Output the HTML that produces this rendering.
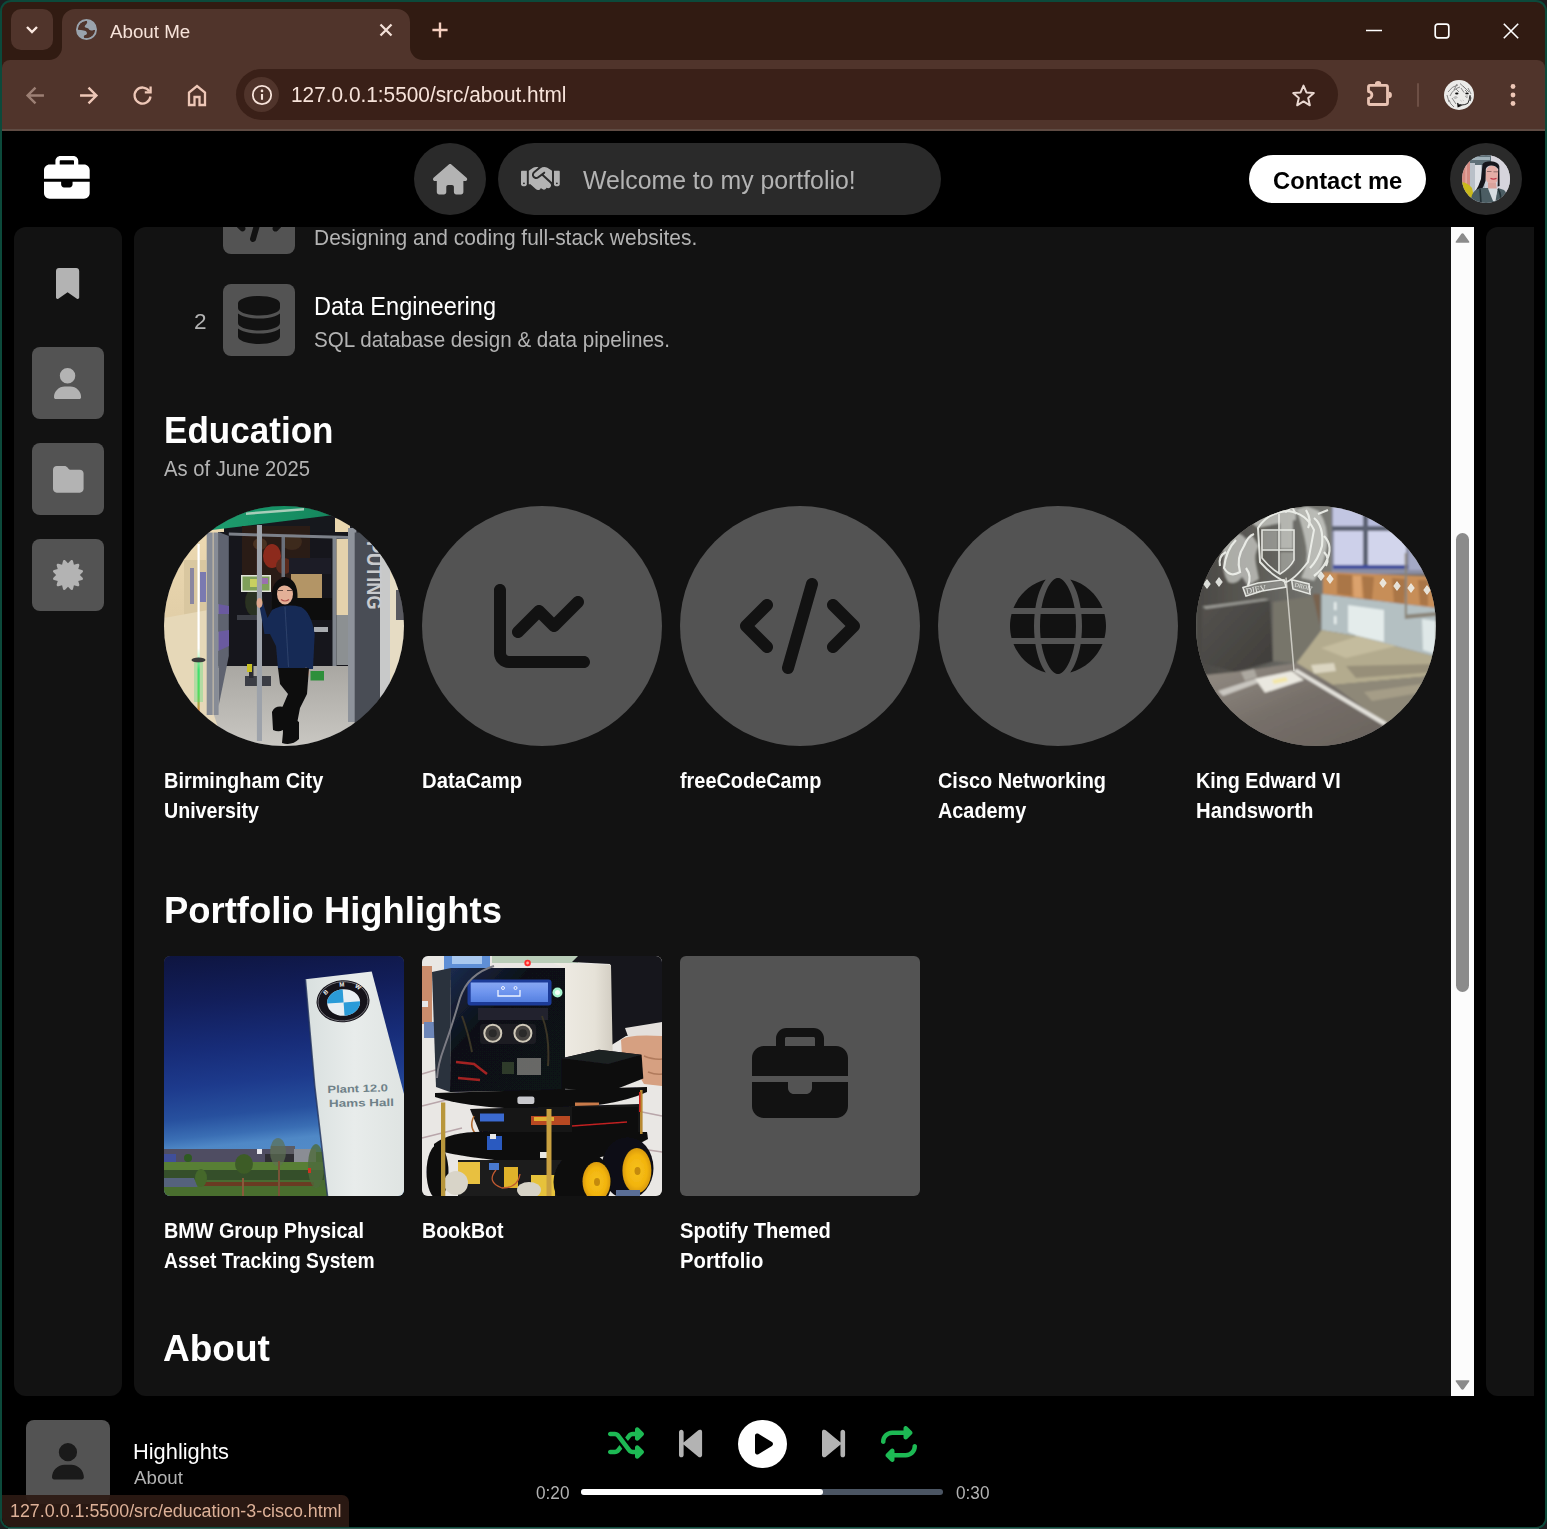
<!DOCTYPE html>
<html lang="en"><head><meta charset="utf-8"><title>About Me</title>
<style>
*{box-sizing:border-box;margin:0;padding:0}
html,body{width:1547px;height:1529px;overflow:hidden;background:#1d1d1f}
body{position:relative;font-family:"Liberation Sans",sans-serif}
.a{position:absolute}
.t{position:absolute;white-space:nowrap;line-height:1;transform-origin:0 50%}
.i{position:absolute;display:block;overflow:visible}
.win{position:absolute;left:0;top:0;width:1547px;height:1529px;background:#0c4a3b;border-radius:11px}
.inner{position:absolute;left:2px;top:2px;width:1543px;height:1525px;background:#311b12;border-radius:9px;overflow:hidden}
.page{position:absolute;left:0;top:129px;width:1543px;height:1396px;background:#000;overflow:hidden}
.panel{position:absolute;background:#121212}
.sq{position:absolute;background:#535353;border-radius:8px}
.circ{position:absolute;border-radius:50%;background:#535353;overflow:hidden}
.card{position:absolute;border-radius:6px;background:#535353;overflow:hidden}
</style></head>
<body>
<div class="win"><div class="a" style="left:8px;top:1528px;width:1531px;height:1px;background:#41605a"></div><div class="inner">
<!-- browser chrome -->
<div class="a" style="left:0;top:58px;width:1543px;height:69px;background:#50342b;border-radius:8px 8px 0 0"></div>
<div class="a" style="left:0;top:127px;width:1543px;height:2px;background:#5f4b43"></div>
<div class="a" style="left:9px;top:7px;width:42px;height:41px;border-radius:10px;background:#50342b"></div>
<svg class="i" style="left:22px;top:22px" width="16" height="12" viewBox="0 0 16 12"><path d="M3 3 L8 8 L13 3" fill="none" stroke="#fbe9e1" stroke-width="2.4"/></svg>
<svg class="i" style="left:47px;top:7px" width="374" height="53" viewBox="0 0 374 53"><path fill="#50342b" d="M0 51 A13 13 0 0 0 13 38 L13 13 A13 13 0 0 1 26 0 L348 0 A13 13 0 0 1 361 13 L361 38 A13 13 0 0 0 374 51 L374 53 L0 53 Z"/></svg>
<svg class="i" style="left:73.600px;top:17.400px" width="21" height="21" viewBox="0 0 21 21"><circle cx="10.500" cy="10.500" r="9.600" fill="#9aa3ad"/><path fill="#50342b" d="M1.700 10.700 A8.800 8.800 0 0 1 10.900 1.700 Q11.700 3.700 10.500 5 Q8.900 6 8.600 7.600 Q9 9 11 9.100 Q12.600 9.300 13.200 10.800 Q15.200 12 17.600 10.900 L19.300 10.900 A8.800 8.800 0 0 1 8.200 19 Q7.200 17.600 8.500 16.300 Q10.700 16 11 14.600 Q11 13 9.600 12.100 Q8 11.300 5 10.900 Z"/><circle cx="10.500" cy="10.500" r="9.600" fill="none" stroke="#9aa3ad" stroke-width="1.800"/></svg>
<span class="t" style="left:108.0px;top:21px;font-size:18px;font-weight:400;color:#f7e3da;transform:scaleX(1.0418);">About Me</span>
<svg class="i" style="left:377px;top:21px" width="14" height="14" viewBox="0 0 14 14"><path d="M1.500 1.500 L12.500 12.500 M12.500 1.500 L1.500 12.500" stroke="#f3e0d8" stroke-width="2.300" fill="none"/></svg>
<svg class="i" style="left:430px;top:20px" width="16" height="16" viewBox="0 0 16 16"><path d="M8 0.400 V15.600 M0.400 8 H15.600" stroke="#f5cfc0" stroke-width="2.400" fill="none"/></svg>
<svg class="i" style="left:1363px;top:27px" width="18" height="4" viewBox="0 0 18 4"><path d="M1 1.500 H17" stroke="#fff" stroke-width="1.600"/></svg>
<svg class="i" style="left:1432px;top:21px" width="16" height="16" viewBox="0 0 16 16"><rect x="1.200" y="1.200" width="13.600" height="13.600" rx="2.500" fill="none" stroke="#fff" stroke-width="1.700"/></svg>
<svg class="i" style="left:1501px;top:21px" width="16" height="16" viewBox="0 0 16 16"><path d="M0.800 0.800 L15.200 15.200 M15.200 0.800 L0.800 15.200" stroke="#fff" stroke-width="1.600"/></svg>
<svg class="i" style="left:23.500px;top:83.500px" width="19" height="19" viewBox="0 0 18 18"><path d="M17 9 H2 M9 1.500 L1.500 9 L9 16.500" fill="none" stroke="#9c7f74" stroke-width="2.300"/></svg>
<svg class="i" style="left:76.600px;top:83.500px" width="19" height="19" viewBox="0 0 18 18"><path d="M1 9 H16 M9 1.500 L16.500 9 L9 16.500" fill="none" stroke="#eec7b7" stroke-width="2.300"/></svg>
<svg class="i" style="left:130px;top:83px" width="21" height="21" viewBox="0 0 21 21"><path d="M17.300 6.200 A8 8 0 1 0 18.500 11.500" fill="none" stroke="#eec7b7" stroke-width="2.300"/><path d="M18.600 1.500 V7.300 H12.800" fill="none" stroke="#eec7b7" stroke-width="2.300"/></svg>
<svg class="i" style="left:185px;top:82px" width="20" height="22" viewBox="0 0 20 22"><path d="M2 21 V8.500 L10 2 L18 8.500 V21 H12.500 V13 H7.500 V21 Z" fill="none" stroke="#eec7b7" stroke-width="2.300"/></svg>
<div class="a" style="left:234px;top:67px;width:1102px;height:51px;border-radius:26px;background:#3a2018"></div>
<div class="a" style="left:241.600px;top:74.600px;width:35.800px;height:35.800px;border-radius:50%;background:#50342b"></div>
<svg class="i" style="left:248.500px;top:82px" width="22" height="22" viewBox="0 0 22 22"><circle cx="11" cy="11" r="9.200" fill="none" stroke="#f7e3da" stroke-width="1.800"/><path d="M11 10 V15.800" stroke="#f7e3da" stroke-width="2.100"/><circle cx="11" cy="6.900" r="1.300" fill="#f7e3da"/></svg>
<span class="t" style="left:289.4px;top:83px;font-size:21.5px;font-weight:400;color:#f7e3da;transform:scaleX(0.9683);">127.0.0.1:5500/src/about.html</span>
<svg class="i" style="left:1288.500px;top:80.500px" width="25" height="25" viewBox="0 0 24 24"><path d="M12 2.500 L14.800 9.100 L21.900 9.700 L16.500 14.400 L18.100 21.400 L12 17.700 L5.900 21.400 L7.500 14.400 L2.100 9.700 L9.200 9.100 Z" fill="none" stroke="#ead8d1" stroke-width="1.900" stroke-linejoin="round"/></svg>
<svg class="i" style="left:1360px;top:74px" width="32" height="34" viewBox="0 0 32 34"><path d="M6.500 15.600 V10.800 Q6.500 9.300 8 9.300 H24 Q25.500 9.300 25.500 10.800 V27 Q25.500 28.500 24 28.500 H8 Q6.500 28.500 6.500 27 V22.400 A3.400 3.400 0 0 0 6.500 15.600 Z" fill="none" stroke="#e9c3b3" stroke-width="2.800" stroke-linejoin="round"/><path d="M12.900 8.200 A3.200 3.200 0 0 1 19.300 8.200 Z M26.700 15.800 A3.200 3.200 0 0 1 26.700 22.200 Z" fill="#e9c3b3"/></svg>
<div class="a" style="left:1415px;top:81px;width:2px;height:24px;background:#6d4f45;border-radius:1px"></div>
<svg class="i" style="left:1442px;top:78.200px" width="30" height="30" viewBox="0 0 30 30"><circle cx="15" cy="15" r="15" fill="#ebebe9"/><g fill="none" stroke="#7c7c7c" stroke-width=".9"><path d="M4 12 Q8 6 14 5 M6 16 Q9 9 16 7 M10 10 L13 4 M16 3.500 L22 9 M19 6 L25 12 M24 8 L27 14 M5 20 Q6 24 10 27 M8 18 L12 24 M3 15 L5 22 M12 9 L15 12 M17 8 L20 12.500 M21 10 L23 12"/><path d="M9.500 17.500 l3 -1 M10.500 18.500 l3 -1 M21 16.500 l2.500 -.8 M22 17.500 l2 -.6" stroke="#9a9a9a"/><path d="M16.500 20.300 l1 .8 M18.800 20 l.8 .6" stroke="#aaa"/></g><ellipse cx="12.800" cy="13.500" rx="1.700" ry=".95" fill="#0a0a0a"/><ellipse cx="23" cy="13.400" rx="1.700" ry=".85" fill="#0a0a0a"/><path d="M13.100 23.200 Q17.500 26.600 23.800 23.400 Q25.600 20 25.900 15.400" fill="none" stroke="#2a2a2a" stroke-width="1"/><path d="M13.100 23.200 Q15 25.400 18.500 25.400 L13.600 27.400Z" fill="#0d0d0d"/><path d="M25.900 15.400 Q27.500 18 26 21" fill="none" stroke="#555" stroke-width="1.400"/></svg>
<svg class="i" style="left:1508px;top:80.300px" width="6" height="26" viewBox="0 0 6 26"><circle cx="3" cy="4.500" r="2.400" fill="#eec7b7"/><circle cx="3" cy="13" r="2.400" fill="#eec7b7"/><circle cx="3" cy="21.500" r="2.400" fill="#eec7b7"/></svg>
<!-- page -->
<div class="page">
<svg class="i" style="left:42.1px;top:25.3px" width="45.7" height="45.7" viewBox="0 0 512 512"><path fill="#fff" d="M184 48H328c4.4 0 8 3.6 8 8V96H176V56c0-4.400 3.600-8 8-8zm-56 8V96H64C28.700 96 0 124.700 0 160v96H192 320 512V160c0-35.300-28.700-64-64-64H384V56c0-30.900-25.100-56-56-56H184c-30.900 0-56 25.100-56 56zM512 288H320v32c0 17.700-14.300 32-32 32H224c-17.700 0-32-14.300-32-32V288H0V416c0 35.300 28.700 64 64 64H448c35.300 0 64-28.700 64-64V288z"/></svg>
<div class="a" style="left:412px;top:12px;width:72px;height:72px;border-radius:50%;background:#2a2a2a"></div>
<svg class="i" style="left:430.9px;top:32.5px" width="34.2" height="30.4" viewBox="0 0 576 512"><path fill="#b3b3b3" d="M575.8 255.5c0 18-15 32.100-32 32.100h-32l.7 160.200c0 2.700-.2 5.400-.5 8.100V472c0 22.100-17.900 40-40 40H456c-1.100 0-2.200 0-3.300-.1c-1.400 .1-2.800 .1-4.200 .1H416 392c-22.100 0-40-17.900-40-40V448 384c0-17.700-14.300-32-32-32H256c-17.700 0-32 14.300-32 32v64 24c0 22.100-17.900 40-40 40H160 128.100c-1.500 0-3-.1-4.500-.2c-1.200 .1-2.400 .2-3.600 .2H104c-22.100 0-40-17.900-40-40V360c0-.9 0-1.900 .1-2.800V287.600H32c-18 0-32-14-32-32.100c0-9 3-17 10-24L266.400 8c7-7 15-8 22-8s15 2 21 7L564.800 231.500c8 7 12 15 11 24z"/></svg>
<div class="a" style="left:496px;top:12px;width:443px;height:72px;border-radius:36px;background:#2a2a2a"></div>
<svg class="i" style="left:518.6px;top:32.0px" width="38.8" height="31.0" viewBox="0 0 640 512"><path fill="#b3b3b3" d="M323.400 85.200l-96.800 78.400c-16.100 13-19.200 36.400-7 53.100c12.900 17.800 38 21.300 55.300 7.800l99.300-77.200c7-5.400 17-4.200 22.500 2.800s4.200 17-2.800 22.500l-20.900 16.200L512 316.800V128h-.7l-3.900-2.500L434.800 79c-15.300-9.800-33.200-15-51.400-15c-21.800 0-43 7.500-60 21.200zm22.800 124.400l-51.700 40.200C263 274.400 217.300 268 193.700 235.600c-22.200-30.500-16.600-73.100 12.700-96.800l83.200-67.300c-11.600-4.900-24.100-7.400-36.800-7.400C234 64 215.700 69.600 200 80l-72 48V352h28.200l91.400 83.400c19.600 17.900 49.900 16.500 67.800-3.100c5.500-6.100 9.200-13.200 11.100-20.600l17 15.600c19.500 17.900 49.900 16.600 67.800-2.900c4.500-4.900 7.800-10.600 9.900-16.500c19.400 13 45.800 10.300 62.100-7.500c17.900-19.500 16.600-49.900-2.900-67.800l-134.200-123zM16 128c-8.800 0-16 7.200-16 16V352c0 17.700 14.300 32 32 32H64c17.700 0 32-14.300 32-32V128H16zM48 320a16 16 0 1 1 0 32 16 16 0 1 1 0-32zM544 128V352c0 17.700 14.300 32 32 32h32c17.700 0 32-14.300 32-32V144c0-8.800-7.200-16-16-16H544zm32 208a16 16 0 1 1 32 0 16 16 0 1 1 -32 0z"/></svg>
<span class="t" style="left:580.8px;top:37px;font-size:25px;font-weight:400;color:#b3b3b3;transform:scaleX(0.9927);">Welcome to my portfolio!</span>
<div class="a" style="left:1247px;top:24px;width:177px;height:48px;border-radius:24px;background:#fff"></div>
<span class="t" style="left:1271.2px;top:38px;font-size:24px;font-weight:700;color:#000;transform:scaleX(0.9893);">Contact me</span>
<div class="a" style="left:1448px;top:12px;width:72px;height:72px;border-radius:50%;background:#2a2a2a"></div>
<div class="a" style="left:1460px;top:24px;width:48px;height:48px;border-radius:50%;overflow:hidden"><svg class="i" style="left:0;top:0" width="48" height="48" viewBox="0 0 48 48"><defs><filter id="abl"><feGaussianBlur stdDeviation="0.6"/></filter></defs><rect width="48" height="48" fill="#cfced6"/>
<g filter="url(#abl)">
<rect x="6" y="0" width="24" height="10" fill="#5f7078"/><rect x="10" y="2" width="18" height="3" fill="#9fb0b8"/>
<rect x="0" y="6" width="8" height="30" fill="#d48a82"/><rect x="3.500" y="8" width="1.200" height="26" fill="#e8b0a8"/>
<rect x="8" y="8" width="5" height="32" fill="#b9c0c8"/><rect x="13" y="10" width="6" height="30" fill="#dfe1e6"/><rect x="19" y="10" width="4" height="26" fill="#aeb8c2"/>
<rect x="29" y="0" width="19" height="40" fill="#d6d4dc"/>
<path d="M0 27 Q6 28 10 33 L12 42 L4 44 L0 40Z" fill="#c9b81c"/>
<ellipse cx="30" cy="20" rx="6.800" ry="9.600" fill="#e4ada6"/>
<path d="M26 28 L34 28 L35 35 L26 35Z" fill="#d9a39c"/>
<path d="M20.400 9.500 Q22 6.300 29 6.300 Q36 6.800 37.300 11 L37.600 31 L35.600 31.500 L36.200 14 Q33 10.300 29 10.600 Q25 11 23.800 14 L23.500 26 Q22 32 18 36 L12.600 37.500 Q17 31 19 24 Q20 16 20.400 9.500Z" fill="#15171b"/>
<path d="M25 16.500 h4.500 M31.500 16.800 h4.500" stroke="#7a5a58" stroke-width=".8"/>
<path d="M28.500 23.300 Q31.500 25 34.500 23.300" stroke="#c23848" stroke-width="1.300" fill="none"/>
<path d="M10 40 Q12 34 20 33 L26 33 L33 44 L36 33 L42 35 Q46 38 46 48 L8 48Z" fill="#4b5d63"/>
<path d="M26 33.500 L35.600 33.500 L33.500 46 L31 46Z" fill="#d6dce1"/>
<path d="M18 34 L19 48 M36 34 Q40 40 38 48" stroke="#243036" stroke-width="1.600" fill="none"/>
</g></svg></div>
<div class="panel" style="left:12px;top:96px;width:108px;height:1169px;border-radius:12px"></div>
<svg class="i" style="left:54.4px;top:137.3px" width="23.2" height="31.0" viewBox="0 0 384 512"><path fill="#b3b3b3" d="M0 48V487.700C0 501.100 10.900 512 24.300 512c5 0 9.900-1.500 14-4.400L192 400 345.700 507.600c4.100 2.900 9 4.400 14 4.400c13.400 0 24.300-10.900 24.300-24.300V48c0-26.500-21.500-48-48-48H48C21.500 0 0 21.500 0 48z"/></svg>
<div class="sq" style="left:30px;top:216px;width:72px;height:72px;"></div>
<svg class="i" style="left:52.4px;top:236.5px" width="27.1" height="31.0" viewBox="0 0 448 512"><path fill="#b3b3b3" d="M224 256A128 128 0 1 0 224 0a128 128 0 1 0 0 256zm-45.700 48C79.800 304 0 383.800 0 482.300C0 498.700 13.300 512 29.700 512H418.300c16.400 0 29.700-13.300 29.700-29.700C448 383.800 368.200 304 269.700 304H178.300z"/></svg>
<div class="sq" style="left:30px;top:312px;width:72px;height:72px;"></div>
<svg class="i" style="left:50.7px;top:332.7px" width="30.6" height="30.6" viewBox="0 0 512 512"><path fill="#b3b3b3" d="M64 480H448c35.300 0 64-28.700 64-64V160c0-35.300-28.700-64-64-64H288c-10.100 0-19.600-4.700-25.600-12.800L243.200 57.600C231.100 41.500 212.100 32 192 32H64C28.700 32 0 60.700 0 96V416c0 35.300 28.700 64 64 64z"/></svg>
<div class="sq" style="left:30px;top:408px;width:72px;height:72px;"></div>
<svg class="i" style="left:51.0px;top:429.0px" width="30.0" height="30.0" viewBox="0 0 512 512"><path fill="#b3b3b3" d="M211 7.300C205 1 196-1.400 187.600 .8s-14.900 8.900-17.100 17.300L154.700 80.600l-62-17.500c-8.400-2.400-17.400 0-23.500 6.100s-8.500 15.100-6.100 23.500l17.500 62L18.100 170.600c-8.400 2.100-15 8.700-17.300 17.100S1 205 7.300 211l46.200 45L7.300 301C1 307-1.400 316 .8 324.400s8.900 14.900 17.300 17.100l62.500 15.800-17.500 62c-2.400 8.400 0 17.400 6.100 23.500s15.100 8.500 23.500 6.100l62-17.500 15.800 62.500c2.100 8.400 8.700 15 17.100 17.300s17.300-.2 23.400-6.400l45-46.200 45 46.200c6.100 6.200 15 8.700 23.400 6.400s14.900-8.900 17.100-17.300l15.800-62.500 62 17.500c8.400 2.400 17.400 0 23.500-6.100s8.500-15.100 6.100-23.500l-17.500-62 62.500-15.800c8.400-2.100 15-8.700 17.300-17.100s-.2-17.300-6.400-23.400l-46.200-45 46.200-45c6.200-6.100 8.700-15 6.400-23.400s-8.900-14.900-17.300-17.100l-62.500-15.800 17.500-62c2.400-8.400 0-17.400-6.100-23.500s-15.100-8.500-23.500-6.100l-62 17.500L341.400 18.100c-2.100-8.400-8.700-15-17.100-17.300S307 1 301 7.300L256 53.500 211 7.300z"/></svg>
<div class="panel" style="left:1484px;top:96px;width:48px;height:1169px;border-radius:12px 0 0 12px"></div>
<div class="panel" style="left:132px;top:96px;width:1340px;height:1169px;border-radius:12px 0 0 12px;overflow:hidden">
<div class="sq" style="left:89px;top:-45px;width:72px;height:72px;"></div>
<svg class="i" style="left:95.0px;top:-33.0px" width="60.0" height="48.0" viewBox="0 0 640 512"><path fill="#121212" d="M392.800 1.200c-17-4.900-34.700 5-39.600 22l-128 448c-4.900 17 5 34.700 22 39.600s34.700-5 39.600-22l128-448c4.900-17-5-34.700-22-39.600zm80.600 120.100c-12.500 12.500-12.500 32.800 0 45.300L562.700 256l-89.400 89.400c-12.500 12.500-12.500 32.800 0 45.300s32.800 12.500 45.300 0l112-112c12.500-12.500 12.500-32.800 0-45.300l-112-112c-12.500-12.500-32.800-12.500-45.300 0zm-306.700 0c-12.500-12.500-32.800-12.500-45.300 0l-112 112c-12.500 12.500-12.500 32.800 0 45.300l112 112c12.500 12.500 32.800 12.500 45.300 0s12.500-32.800 0-45.300L77.300 256l89.400-89.400c12.500-12.500 12.500-32.800 0-45.300z"/></svg>
<span class="t" style="left:179.7px;top:0px;font-size:22px;font-weight:400;color:#b3b3b3;transform:scaleX(0.9525);">Designing and coding full-stack websites.</span>
<span class="t" style="left:59.6px;top:85px;font-size:21.5px;font-weight:400;color:#b3b3b3;transform:scaleX(1.0506);">2</span>
<div class="sq" style="left:89px;top:57px;width:72px;height:72px;"></div>
<svg class="i" style="left:104.0px;top:69.3px" width="42.0" height="48.0" viewBox="0 0 448 512"><path fill="#121212" d="M448 80v48c0 44.200-100.300 80-224 80S0 172.200 0 128V80C0 35.800 100.300 0 224 0S448 35.800 448 80zM393.200 214.700c20.800-7.400 39.900-16.900 54.800-28.600V288c0 44.200-100.300 80-224 80S0 332.200 0 288V186.100c14.900 11.800 34 21.200 54.800 28.600C99.700 230.700 159.500 240 224 240s124.300-9.300 169.200-25.300zM0 346.100c14.900 11.800 34 21.200 54.800 28.600C99.700 390.700 159.500 400 224 400s124.300-9.300 169.200-25.300c20.800-7.400 39.900-16.900 54.800-28.600V432c0 44.200-100.300 80-224 80S0 476.200 0 432V346.100z"/></svg>
<span class="t" style="left:179.5px;top:67px;font-size:25px;font-weight:400;color:#fff;transform:scaleX(0.9424);">Data Engineering</span>
<span class="t" style="left:179.7px;top:102px;font-size:22px;font-weight:400;color:#b3b3b3;transform:scaleX(0.9377);">SQL database design &amp; data pipelines.</span>
<span class="t" style="left:29.9px;top:185px;font-size:37px;font-weight:700;color:#fff;transform:scaleX(0.9476);">Education</span>
<span class="t" style="left:30.0px;top:231px;font-size:22px;font-weight:400;color:#b3b3b3;transform:scaleX(0.9187);">As of June 2025</span>
<div class="circ" style="left:30px;top:279px;width:240px;height:240px;"><svg class="i" style="left:0;top:0" width="240" height="240" viewBox="0 0 240 240"><defs><linearGradient id="ugr" x1="0" y1="0" x2="1" y2="0"><stop offset="0" stop-color="#23a476"/><stop offset=".5" stop-color="#169064"/><stop offset="1" stop-color="#0c7350"/></linearGradient>
<linearGradient id="ubg" x1="0" y1="0" x2="0" y2="1"><stop offset="0" stop-color="#efdcb4"/><stop offset=".45" stop-color="#e2cfa8"/><stop offset="1" stop-color="#e9dcc0"/></linearGradient>
<linearGradient id="ufl" x1="0" y1="0" x2="0" y2="1"><stop offset="0" stop-color="#a9a7a2"/><stop offset="1" stop-color="#c9c7c2"/></linearGradient>
<linearGradient id="ugl" x1="0" y1="0" x2="0" y2="1"><stop offset="0" stop-color="#ffffff"/><stop offset=".62" stop-color="#ffffff"/><stop offset=".66" stop-color="#d8ffe0"/><stop offset=".75" stop-color="#35e06a"/><stop offset=".9" stop-color="#56d84a"/><stop offset="1" stop-color="#f08040"/></linearGradient>
<filter id="ubl"><feGaussianBlur stdDeviation="0.7"/></filter></defs><rect width="240" height="240" fill="#16181d"/>
<g filter="url(#ubl)">
<rect x="0" y="0" width="60" height="240" fill="url(#ubg)"/>
<rect x="20" y="54" width="22" height="60" fill="#d9c7a0"/><rect x="26" y="62" width="4" height="36" fill="#8a86a0"/><rect x="36" y="66" width="6" height="30" fill="#7a7ab0"/>
<path d="M0 112 L44 104 L44 240 L0 240Z" fill="#e6d8b8"/>
<rect x="33.500" y="38" width="2.200" height="168" fill="url(#ugl)"/>
<ellipse cx="34.500" cy="154" rx="7" ry="2.500" fill="#3a3a3a"/>
<rect x="30" y="156" width="9" height="40" fill="#52e07a" opacity=".35"/>
<path d="M48 24 L170 9 L240 9 L240 0 L0 0 L0 30Z" fill="url(#ugr)"/>
<path d="M82 6.500 L140 2 L140 4.500 L82 9Z" fill="#a7cdb9"/>
<path d="M167 9 L240 9 L240 30 L185 30Z" fill="#1a1c22"/>
<rect x="171" y="12" width="15" height="15" fill="#e9d6ae"/>
<rect x="215.800" y="20" width="24" height="220" fill="#c8c9c9"/><rect x="226" y="20" width="14" height="220" fill="#e6dcc4"/><rect x="232" y="84" width="8" height="30" fill="#5a5a60"/>
<rect x="54" y="26" width="131" height="136" fill="#15161b"/>
<rect x="78" y="20" width="68" height="66" fill="#2c1a16"/>
<ellipse cx="108" cy="50" rx="9" ry="12" fill="#8c2c1e"/><ellipse cx="96" cy="38" rx="7" ry="6" fill="#4a3020"/><ellipse cx="128" cy="36" rx="10" ry="8" fill="#3c2a1c"/><ellipse cx="120" cy="60" rx="8" ry="8" fill="#5a2a1e"/><ellipse cx="90" cy="96" rx="9" ry="14" fill="#2a3020"/>
<rect x="125" y="52" width="42" height="16" fill="#1c1e25"/>
<rect x="127" y="68" width="31" height="24" fill="#b39566"/>
<rect x="77" y="69" width="30" height="17" fill="#dfe3d8"/><rect x="78.500" y="70.500" width="27" height="14" fill="#7fa05a"/><rect x="86" y="73" width="10" height="8" fill="#c8d060"/><rect x="97" y="72" width="7" height="6" fill="#9a70b0"/>
<rect x="133" y="92" width="35" height="22" fill="#0b0c0f"/>
<rect x="150" y="121" width="14" height="5" fill="#a9acb0"/>
<rect x="73" y="109" width="22" height="5" fill="#3a3d44"/>
<rect x="117.500" y="31" width="3.500" height="40" fill="#6b707a"/>
<path d="M54.600 160 L184 160 L192 216 L180 240 L60 240 L50 209Z" fill="url(#ufl)"/>
<path d="M54.600 26 L64.800 30 L64.800 150 L54.600 200Z" fill="#5f6470"/>
<path d="M54 98 L65 100 L65 108 L54 108Z M52 126 L65 124 L65 140 L52 146Z" fill="#6a5aa0"/>
<path d="M42.700 26.500 H48.700 V209 H42.700Z M49.500 26.500 H54.600 V209 H49.500Z" fill="#878c96"/>
<path d="M64.800 26.500 L184.700 30 L184.700 33 L64.800 29.500Z" fill="#7b8089"/>
<rect x="168.500" y="30" width="4" height="130" fill="#7f848c"/>
<rect x="172.500" y="33" width="11.500" height="76" fill="#e4d2ac"/><rect x="172.500" y="109" width="11.500" height="50" fill="#8c9092"/>
<rect x="81" y="170" width="26" height="10" fill="#3b3e45"/><rect x="85" y="158" width="4.500" height="14" fill="#2a2c32"/><rect x="83" y="158" width="5" height="8" fill="#c8c020"/>
<rect x="146.500" y="165" width="13.500" height="9.500" fill="#2f8f3a"/>
<rect x="92.900" y="19" width="5.100" height="216" fill="#9da2aa"/>
<rect x="184" y="22" width="8.400" height="194" fill="#8e939b"/>
<rect x="190.700" y="26.500" width="25.300" height="194" fill="#4a4d54"/>
<path d="M108 92 Q107 74 121 71 Q134 73 133.500 92 L134.500 108 Q128 111 126.500 100 L115.500 100 Q114 111 107.500 109Z" fill="#0e0d10"/>
<ellipse cx="121" cy="88" rx="8" ry="10.500" fill="#e3b097"/>
<path d="M112.500 85 Q115 74 124 75.500 Q130.500 78 130 87 Q126 79 120 79.500 Q115 80 112.500 85Z" fill="#0e0d10"/>
<path d="M117 93.500 Q121 96.500 125 93.500" stroke="#b0504a" stroke-width="1.200" fill="none"/>
<path d="M114 84.500 h5 M123 84.500 h5" stroke="#5a4038" stroke-width=".9"/>
<path d="M108 104 Q121 97 137 101 Q147 106 150.700 128 L149 163 L114 163 L112 140 L106 128 L100.500 128 L95.500 100 L99 97 L103.500 112Z" fill="#182b54"/>
<path d="M121 101 L124.500 161" stroke="#2d416c" stroke-width="1"/>
<ellipse cx="95.500" cy="97" rx="3" ry="5" fill="#dfa98e"/><ellipse cx="142" cy="166.500" rx="3.400" ry="4.800" fill="#dfa98e"/>
<path d="M114 162 L145 162 L143 188 L136 202 L131 228 L119 228 L118 202 L124 188 L116 178Z" fill="#0e0e10"/>
<path d="M108 206 Q111 199 120 201 L122 220 Q118 228 109 224Z M120 216 Q128 210 135 216 L135 233 Q128 240 118 237Z" fill="#0b0b0d"/>
</g>
<text transform="translate(203.200 35) rotate(90)" font-family="Liberation Sans, sans-serif" font-weight="700" font-size="22" fill="#c9cbce" textLength="68.500" lengthAdjust="spacingAndGlyphs">PUTING</text></svg></div>
<div class="circ" style="left:288px;top:279px;width:240px;height:240px;"></div>
<svg class="i" style="left:360.0px;top:351.0px" width="96.0" height="96.0" viewBox="0 0 512 512"><path fill="#121212" d="M64 64c0-17.700-14.300-32-32-32S0 46.300 0 64V400c0 44.200 35.800 80 80 80H480c17.700 0 32-14.300 32-32s-14.300-32-32-32H80c-8.800 0-16-7.200-16-16V64zm406.600 86.600c12.500-12.500 12.500-32.800 0-45.300s-32.800-12.500-45.300 0L320 210.700l-57.400-57.400c-12.500-12.500-32.800-12.500-45.300 0l-112 112c-12.500 12.500-12.500 32.800 0 45.300s32.800 12.500 45.300 0L240 221.300l57.400 57.400c12.500 12.500 32.800 12.500 45.300 0l128-128z"/></svg>
<div class="circ" style="left:546px;top:279px;width:240px;height:240px;"></div>
<svg class="i" style="left:606.0px;top:351.0px" width="120.0" height="96.0" viewBox="0 0 640 512"><path fill="#121212" d="M392.800 1.200c-17-4.900-34.700 5-39.600 22l-128 448c-4.900 17 5 34.700 22 39.600s34.700-5 39.600-22l128-448c4.900-17-5-34.700-22-39.600zm80.600 120.100c-12.500 12.500-12.500 32.800 0 45.300L562.700 256l-89.400 89.400c-12.500 12.500-12.500 32.800 0 45.300s32.800 12.500 45.300 0l112-112c12.500-12.500 12.500-32.800 0-45.300l-112-112c-12.500-12.500-32.800-12.500-45.300 0zm-306.700 0c-12.500-12.500-32.800-12.500-45.300 0l-112 112c-12.500 12.500-12.500 32.800 0 45.300l112 112c12.500 12.500 32.800 12.500 45.300 0s12.500-32.800 0-45.300L77.300 256l89.400-89.400c12.500-12.500 12.500-32.800 0-45.300z"/></svg>
<div class="circ" style="left:804px;top:279px;width:240px;height:240px;"></div>
<svg class="i" style="left:876.0px;top:351.0px" width="96.0" height="96.0" viewBox="0 0 512 512"><path fill="#121212" d="M352 256c0 22.200-1.200 43.600-3.300 64H163.300c-2.200-20.400-3.300-41.800-3.300-64s1.200-43.600 3.300-64H348.700c2.200 20.400 3.300 41.800 3.300 64zm28.800-64H503.900c5.300 20.500 8.100 41.900 8.100 64s-2.800 43.500-8.100 64H380.800c2.100-20.600 3.200-42 3.200-64s-1.100-43.400-3.200-64zm112.600-32H376.700c-10-63.900-29.800-117.400-55.300-151.600c78.300 20.700 142 77.500 171.900 151.600zm-149.100 0H167.700c6.100-36.400 15.500-68.600 27-94.700c10.500-23.600 22.200-40.700 33.500-51.500C239.400 3.200 248.700 0 256 0s16.600 3.200 27.800 13.800c11.300 10.800 23 27.900 33.500 51.500c11.600 26 20.900 58.200 27 94.700zm-209 0H18.600C48.600 85.900 112.200 29.100 190.600 8.400C165.100 42.600 145.300 96.100 135.300 160zM8.100 192H131.200c-2.100 20.600-3.200 42-3.200 64s1.100 43.400 3.200 64H8.100C2.800 299.500 0 278.100 0 256s2.800-43.500 8.100-64zM194.700 446.600c-11.600-26-20.900-58.200-27-94.600H344.300c-6.100 36.400-15.500 68.600-27 94.600c-10.500 23.600-22.200 40.700-33.500 51.500C272.600 508.800 263.300 512 256 512s-16.600-3.200-27.800-13.800c-11.300-10.800-23-27.900-33.500-51.500zM135.300 352c10 63.900 29.800 117.400 55.300 151.600C112.200 482.900 48.600 426.100 18.600 352H135.300zm358.100 0c-30 74.100-93.600 130.900-171.900 151.600c25.500-34.200 45.200-87.700 55.300-151.600H493.400z"/></svg>
<div class="circ" style="left:1062px;top:279px;width:240px;height:240px;"><svg class="i" style="left:0;top:0" width="240" height="240" viewBox="0 0 240 240"><defs><linearGradient id="egl" x1="0" y1="0" x2="1" y2="0"><stop offset="0" stop-color="#4a4844"/><stop offset=".45" stop-color="#5c5b56"/><stop offset="1" stop-color="#7b7c77"/></linearGradient>
<linearGradient id="efl" x1="0" y1="0" x2="1" y2="1"><stop offset="0" stop-color="#968f86"/><stop offset=".5" stop-color="#766f69"/><stop offset="1" stop-color="#69625d"/></linearGradient>
<linearGradient id="epn" x1="0" y1="0" x2="1" y2="1"><stop offset="0" stop-color="#55534f"/><stop offset="1" stop-color="#3f3d3a"/></linearGradient>
<filter id="ebl"><feGaussianBlur stdDeviation="0.9"/></filter><filter id="ebl2"><feGaussianBlur stdDeviation="0.5"/></filter></defs><rect width="240" height="240" fill="#6f6c66"/>
<g filter="url(#ebl)">
<rect x="0" y="0" width="136" height="170" fill="url(#egl)"/>
<rect x="135.800" y="0" width="104.200" height="68" fill="#8a8ea4"/>
<rect x="137" y="0" width="30" height="20" fill="#c2c6e2"/><rect x="172" y="2" width="40" height="18" fill="#b7bcdc"/>
<rect x="138" y="25" width="29" height="34" fill="#cdd0ea"/><rect x="172" y="25" width="38" height="34" fill="#d2d5ec"/><rect x="213" y="30" width="14" height="34" fill="#a4a9c6"/>
<rect x="167" y="0" width="5" height="62" fill="#5c6272"/><rect x="136" y="20" width="76" height="5" fill="#5c6272"/>
<rect x="137" y="59" width="75" height="3.800" fill="#3c4c9c"/>
<path d="M127 66 L240 70.600 L240 102 L127 88Z" fill="#c78e59"/>
<path d="M141 68 L156 69 L156 90 L141 88Z M166 70 L178 71 L176 94 L168 93Z M196 72 L210 73 L208 98 L198 97Z M222 74 L232 74 L232 100 L224 99Z" fill="#a06e42" opacity=".75"/>
<path d="M157 70 L165 70 L166 92 L158 91Z" fill="#e0a872" opacity=".8"/>
<path d="M125.600 88 L240 102 L240 150.700 L161.700 130.300 L125.600 124Z" fill="#b4c0c2"/>
<path d="M152 99 L188 104 L188 136 L161.700 130 L152 126Z" fill="#e4eceb"/><path d="M226 113 L240 115 L240 148 L227 144Z" fill="#dfe8e8"/>
<path d="M138 96 l2.500 .3 l0 8 l-2.500 -.3Z M138 110 l2.500 .3 l0 8 l-2.500 -.3Z" fill="#e8efee"/>
<path d="M208.800 47 L211 47 L211 108.500 L240 106 L240 110 L208.800 113Z" fill="#8a8478"/>
<path d="M117 88 L124 88 L124 124 L117 124Z" fill="#78624e"/>
<path d="M77 96 L117 90 L125 124 L100.500 157 L77 155Z" fill="#77746b"/>
<path d="M6.300 100.500 L69 92.600 L74 94 L77 155.400 L39 166 L6.300 157Z" fill="url(#epn)"/>
<path d="M6.300 100.500 L69 92.600 L74 94 L10 103Z" fill="#9a9a94"/>
<path d="M100.500 157 L125.600 124 L161.700 130.300 L240 150.700 L240 169.500 L136.600 179Z" fill="#b3ab8e"/>
<path d="M125 142 L161.700 130.300 L200 140 L150 152Z" fill="#c4bc9e"/>
<path d="M150 160 L240 158 L240 166 L160 172Z" fill="#978f79"/>
<path d="M136.600 179 L240 169.500 L240 212 L191.500 220Z" fill="#8e8878"/>
<path d="M168 186 L240 176 L240 184 L176 195Z" fill="#a59d87"/>
<path d="M0 170 L39 166 L100.500 157 L136.600 179 L191.500 220 L150 240 L40 240 L0 210Z" fill="url(#efl)"/>
<path d="M22 185 L60 172.500 L62 177 L27 190Z" fill="#c9c6c0"/>
<path d="M45 166 L58 163 L61 171 L49 175Z" fill="#b5b2aa" opacity=".8"/>
<path d="M97 165 L101 163 L191 216.500 L187.500 219.500Z" fill="#e4e2dc"/>
<path d="M59 172.700 L95.700 165 L108 174 L69 186.800Z" fill="#eae8e0"/><path d="M76 174 L90 171 L92 175 L78 178Z" fill="#f3e6a8"/>
<path d="M115 159 L138 157 L140 165 L118 167.500Z" fill="#dbd5c1"/>
</g>
<g filter="url(#ebl)" fill="#eceee9" opacity=".58">
<path d="M28 50 Q23 38 33 29 Q44 24 50 33 L56 29 L63 40 Q58 48 60 58 L63 73 L52 80 L46 71 Q40 80 32 76 Q25 66 28 50Z"/>
<path d="M100 3 L111 0 L123 5 Q133 20 131 40 Q128 60 118 75 L105 72 Q113 56 110 40 Q107 22 100 3Z"/>
<path d="M50 13 Q70 -2 100 1 L100 14 L62 22Z"/>
<path d="M84 8 H97 V43 H84Z"/><path d="M66 24 H82 V44 H66Z M84 46 H98 V56 Q92 64 84 68Z" opacity=".6"/>
<path d="M47 81.600 L62 77 L88 73.800 L90 81 L66 85 L50 90Z M95.700 73.800 L113 78 L114 88 L97 83Z" opacity=".5"/>
</g>
<g filter="url(#ebl2)" fill="none" stroke="#f0f2ed" opacity=".9">
<path d="M90 71.600 L98 165" stroke-width="1.500" stroke="#d5d4cc"/>
<path d="M47 81.600 L62 77 L88 73.800 L90 81 L66 85 L50 90Z M95.700 73.800 L113 78 L114 88 L97 83Z" stroke-width="1.600"/>
<path d="M62 22 Q72 6 92 5 Q110 7 118 24 L112 56 Q98 74 90 76 Q76 70 64 56Z" stroke-width="2"/>
<path d="M66 24 L98 24 L98 54 Q94 62 84 68 Q74 62 66 52Z M83 8 V68 M66 44 H98" stroke-width="1.600"/>
<path d="M40 34 Q30 44 28 62 Q34 72 44 66 Q40 52 48 40 Q52 30 58 28 M30 46 Q22 50 24 60 M50 62 Q56 70 52 80 M34 30 L28 24 M44 26 L42 18" stroke-width="2.200"/>
<path d="M118 12 Q128 20 126 40 Q122 54 114 62 M128 30 Q138 40 130 56 Q126 64 118 70 M122 8 L132 4 M110 4 Q116 14 112 22 M128 46 Q134 52 130 60" stroke-width="2.200"/>
<path d="M80 8 L84 2 L90 6 L96 1 L100 8" stroke-width="1.600"/>
<path d="M8 78 l3 -4 l3 4 l-3 4Z M20 76 l3 -4 l3 4 l-3 4Z M122 70 l3 -4 l3 4 l-3 4Z M131 73 l3 -4 l3 4 l-3 4Z M184 77 l3 -4 l3 4 l-3 4Z M198 80 l3 -4 l3 4 l-3 4Z M212 82 l3 -4 l3 4 l-3 4Z M228 84 l3 -4 l3 4 l-3 4Z" stroke-width="1.200" fill="#eceee9"/>
</g>
<text x="50.500" y="88" font-family="Liberation Serif, serif" font-size="8.500" fill="#eef0eb" opacity=".9" transform="rotate(-10 50 88)">DIEV</text>
<text x="98.500" y="80.500" font-family="Liberation Serif, serif" font-size="6" fill="#eef0eb" opacity=".85" transform="rotate(13 98 80)">DROIT</text></svg></div>
<span class="t" style="left:29.7px;top:543px;font-size:22px;font-weight:700;color:#fff;transform:scaleX(0.9051);">Birmingham City</span>
<span class="t" style="left:29.8px;top:573px;font-size:22px;font-weight:700;color:#fff;transform:scaleX(0.8919);">University</span>
<span class="t" style="left:287.7px;top:543px;font-size:22px;font-weight:700;color:#fff;transform:scaleX(0.9206);">DataCamp</span>
<span class="t" style="left:545.7px;top:543px;font-size:22px;font-weight:700;color:#fff;transform:scaleX(0.9039);">freeCodeCamp</span>
<span class="t" style="left:804.2px;top:543px;font-size:22px;font-weight:700;color:#fff;transform:scaleX(0.9039);">Cisco Networking</span>
<span class="t" style="left:803.7px;top:573px;font-size:22px;font-weight:700;color:#fff;transform:scaleX(0.9013);">Academy</span>
<span class="t" style="left:1061.7px;top:543px;font-size:22px;font-weight:700;color:#fff;transform:scaleX(0.8963);">King Edward VI</span>
<span class="t" style="left:1061.7px;top:573px;font-size:22px;font-weight:700;color:#fff;transform:scaleX(0.9228);">Handsworth</span>
<span class="t" style="left:29.8px;top:665px;font-size:37px;font-weight:700;color:#fff;transform:scaleX(0.9847);">Portfolio Highlights</span>
<div class="card" style="left:30px;top:729px;width:240px;height:240px;"><svg class="i" style="left:0;top:0" width="240" height="240" viewBox="0 0 240 240"><defs><linearGradient id="bsky" x1="0" y1="0" x2="0.10" y2="1"><stop offset="0" stop-color="#0e1540"/><stop offset=".2" stop-color="#121e5a"/><stop offset=".4" stop-color="#172c78"/><stop offset=".55" stop-color="#1d3a8c"/><stop offset=".68" stop-color="#27509e"/><stop offset=".76" stop-color="#3a6eb4"/><stop offset=".805" stop-color="#4f88c6"/><stop offset="1" stop-color="#5a92cc"/></linearGradient>
<linearGradient id="bpil" x1="0" y1="0" x2="1" y2="0"><stop offset="0" stop-color="#d9e0df"/><stop offset=".5" stop-color="#e8eceb"/><stop offset="1" stop-color="#dfe4e2"/></linearGradient>
<filter id="bblur"><feGaussianBlur stdDeviation="0.7"/></filter></defs><rect width="240" height="240" fill="url(#bsky)"/>
<g filter="url(#bblur)">
<rect x="0" y="196" width="165" height="44" fill="#486c30"/>
<rect x="0" y="193" width="107" height="13" fill="#4f4e62"/>
<rect x="0" y="198" width="12" height="8" fill="#3f4f9a"/>
<rect x="107" y="190" width="24" height="22" fill="#5c5b64"/>
<rect x="101" y="198" width="29" height="13" fill="#2f2f33"/>
<rect x="130" y="193" width="22" height="20" fill="#8a8d94"/>
<rect x="93" y="193" width="5" height="5" fill="#e8e8ee"/>
<rect x="0" y="206" width="160" height="9" fill="#587f36"/>
<rect x="0" y="214" width="160" height="10" fill="#36502a"/>
<path d="M0 222 H30 L34 232 H0Z" fill="#55627c"/>
<rect x="40" y="226" width="110" height="4" fill="#6b3a22"/>
<rect x="0" y="231" width="165" height="9" fill="#4a6e2e"/>
<ellipse cx="24" cy="202" rx="4" ry="4" fill="#2f5a22"/>
<ellipse cx="80" cy="208" rx="9" ry="10" fill="#3d5c28"/>
<ellipse cx="37" cy="222" rx="6" ry="9" fill="#44682b"/>
<ellipse cx="114" cy="196" rx="8" ry="14" fill="#5d6f52" opacity=".7"/>
<ellipse cx="152" cy="210" rx="8" ry="22" fill="#4d6a3c" opacity=".8"/>
<rect x="78" y="222" width="2" height="18" fill="#8a5a3a"/><rect x="114" y="205" width="2" height="35" fill="#7a5238"/>
<rect x="144" y="212" width="3" height="5" fill="#d03020"/>
</g>
<path d="M141.400 23.200 L207.700 15.500 L240 138 L240 240 L163.500 240 L150.700 129.500Z" fill="url(#bpil)"/>
<path d="M141.400 23.200 L150.700 129.500 L163.500 240" fill="none" stroke="#24345e" stroke-width="1.600" opacity=".8"/>
<g transform="rotate(-4 179 45)">
<ellipse cx="179" cy="45.300" rx="26.500" ry="21" fill="#15131a"/>
<ellipse cx="179" cy="45.300" rx="25" ry="19.600" fill="none" stroke="#8a8a90" stroke-width=".8"/>
<ellipse cx="179.500" cy="46.500" rx="16.500" ry="13.300" fill="#e9eef2"/>
<path d="M179.500 46.500 L179.500 33.200 A16.500 13.300 0 0 0 163 46.500Z" fill="#2b9bd8"/>
<path d="M179.500 46.500 L179.500 59.800 A16.500 13.300 0 0 0 196 46.500Z" fill="#2b9bd8"/>
<text x="161" y="37" font-family="Liberation Sans, sans-serif" font-weight="700" font-size="6" fill="#f2f2f2" transform="rotate(-38 163 36)">B</text>
<text x="176.500" y="30.500" font-family="Liberation Sans, sans-serif" font-weight="700" font-size="6" fill="#f2f2f2">M</text>
<text x="191" y="33" font-family="Liberation Sans, sans-serif" font-weight="700" font-size="6" fill="#f2f2f2" transform="rotate(36 193 33)">W</text>
</g>
<g font-family="Liberation Sans, sans-serif" font-weight="700" font-size="10.400" fill="#6f8188">
<text x="163.500" y="137" transform="rotate(-1.500 163 137)" textLength="60.500" lengthAdjust="spacingAndGlyphs">Plant 12.0</text>
<text x="165" y="151" transform="rotate(-1 165 151)" textLength="65" lengthAdjust="spacingAndGlyphs">Hams Hall</text>
</g></svg></div>
<div class="card" style="left:288px;top:729px;width:240px;height:240px;"><svg class="i" style="left:0;top:0" width="240" height="240" viewBox="0 0 240 240"><defs><linearGradient id="klcd" x1="0" y1="0" x2="0" y2="1"><stop offset="0" stop-color="#86a6f2"/><stop offset=".5" stop-color="#6f95ee"/><stop offset="1" stop-color="#5580e0"/></linearGradient>
<linearGradient id="kbox" x1="0" y1="0" x2="1" y2="1"><stop offset="0" stop-color="#1b2b4e"/><stop offset=".35" stop-color="#0d1118"/><stop offset="1" stop-color="#101216"/></linearGradient>
<linearGradient id="kwb" x1="0" y1="0" x2="1" y2="0"><stop offset="0" stop-color="#f0ede6"/><stop offset=".7" stop-color="#e6e2d8"/><stop offset="1" stop-color="#d2cdc2"/></linearGradient>
<radialGradient id="khub"><stop offset="0" stop-color="#f7c21c"/><stop offset=".7" stop-color="#f2b40e"/><stop offset="1" stop-color="#d99a08"/></radialGradient>
<filter id="kbl"><feGaussianBlur stdDeviation="0.55"/></filter></defs><rect width="240" height="240" fill="#e9e7e4"/>
<g filter="url(#kbl)">
<path d="M0 118 L60 100 M0 150 L40 140 M190 150 L240 160 M0 182 L40 172 M200 190 L240 196" stroke="#b9a6aa" stroke-width="1.500" fill="none"/>
<rect x="0" y="10" width="10" height="58" fill="#c98c6c"/><rect x="0" y="45" width="6" height="6" fill="#e8e8e8"/>
<rect x="2" y="66" width="11" height="16" fill="#6d86b8"/>
<rect x="70" y="0" width="86" height="7" fill="#b9cdb8"/>
<rect x="22" y="0" width="46" height="24" fill="#5f8fd6"/><rect x="30" y="0" width="30" height="8" fill="#a9c8ee"/>
<path d="M156 0 H240 V76 L204 80 L188 90 L188 8 L150 6Z" fill="#15161b"/>
<path d="M203 72 L240 66 V86 L208 86Z" fill="#e4e0dc"/>
<path d="M199 84 Q205 78 240 80 V130 L222 128 Q212 110 200 100Z" fill="#d6a081"/>
<path d="M222 100 Q232 104 240 103 M226 116 Q234 119 240 118" stroke="#b07a5c" stroke-width="1.500" fill="none"/>
<path d="M131 7 L189 8.700 L190.700 98.800 L177 102 L143 100.500 L143 12Z" fill="url(#kwb)"/>
<path d="M10 16 L29 12 L28 136 L14 131Z" fill="#2a303c"/>
<path d="M29 12 L143 12 L143 134.500 L28 136Z" fill="url(#kbox)"/>
<rect x="45.500" y="23.500" width="84" height="26" rx="3" fill="#1c3a98"/>
<rect x="48.700" y="26.500" width="77.300" height="19.500" fill="url(#klcd)"/>
<path d="M76 34 v6 h2 M98 34 v6 h-2 M78 40 h18" stroke="#eef3ff" stroke-width="1.300" fill="none"/><circle cx="81" cy="32" r="1.500" fill="none" stroke="#eef3ff" stroke-width="1"/><circle cx="93.500" cy="32" r="1.500" fill="none" stroke="#eef3ff" stroke-width="1"/>
<circle cx="135.500" cy="36.500" r="5" fill="#a8f5cf"/><circle cx="135.500" cy="36.500" r="2.500" fill="#f4fff8"/>
<circle cx="105.600" cy="7" r="3.200" fill="#ff2a2a"/><circle cx="105.600" cy="7" r="1.400" fill="#ffb0a0"/>
<rect x="56" y="52" width="70" height="12" fill="#20242e"/>
<rect x="58" y="68" width="56" height="20" rx="3" fill="#1a1c22"/>
<circle cx="70.800" cy="77.200" r="8.500" fill="#45433f" stroke="#cfc8b8" stroke-width="2"/><circle cx="70.800" cy="77.200" r="4" fill="#2a2a2a"/>
<circle cx="100.900" cy="77.200" r="8.500" fill="#45433f" stroke="#cfc8b8" stroke-width="2"/><circle cx="100.900" cy="77.200" r="4" fill="#2a2a2a"/>
<path d="M34 106 L52 108 L65 118 M36 122 L58 124" stroke="#a32222" stroke-width="2.500" fill="none"/>
<rect x="95" y="102" width="24" height="17" fill="#7d7d7a" opacity=".8"/><rect x="80" y="106" width="12" height="12" fill="#2f3a2c"/>
<path d="M40 60 Q46 76 50 96 M120 60 Q128 80 126 110" stroke="#3a3526" stroke-width="2" fill="none"/>
<path d="M72 10 Q46 18 38 42 Q30 70 22 92 Q16 108 15 122" stroke="#7c7c84" stroke-width="2" fill="none"/>
<path d="M139.700 102.200 L177 93.700 L219.600 98.800 L221.300 122.600 L190.700 134.500 L139.700 132.800Z" fill="#0c0c0e"/>
<path d="M139.700 102.200 L177 93.700 L219.600 98.800 L186 108Z" fill="#1f2024"/>
<path d="M13 137 L225 131 L225 136 Q190 152 120 153 Q50 153 13 141Z" fill="#0a0a0c"/>
<rect x="95.400" y="140.500" width="17" height="7.500" rx="2" fill="#c8c8cc"/>
<rect x="153" y="146.500" width="24" height="5" fill="#c87a4a"/>
<path d="M48 153 L218 148 L218 180 L60 182Z" fill="#131315"/>
<rect x="150" y="151" width="66" height="27" fill="#0c0c0e"/>
<rect x="109" y="160" width="39" height="9" fill="#b84a22"/><rect x="112" y="161" width="20" height="4" fill="#e0b030"/>
<rect x="58" y="157.500" width="24" height="8" fill="#3a6ad0"/>
<path d="M52 160 Q46 172 56 180 M60 176 Q66 186 62 192" stroke="#b06a30" stroke-width="1.500" fill="none"/>
<path d="M150 170 L205 166" stroke="#c02020" stroke-width="1.500"/>
<ellipse cx="15.500" cy="216" rx="11" ry="27" fill="#0e0e10"/>
<path d="M12 188 Q30 174 70 176 L225 176 L226 183 Q190 204 140 206 Q70 208 12 194Z" fill="#0b0b0d"/>
<rect x="65" y="180" width="15" height="14" fill="#2a5ac0"/><rect x="68" y="178" width="6" height="5" fill="#e8e8e8"/>
<rect x="118" y="196" width="9" height="6" fill="#e8e6e0"/>
<rect x="36" y="204" width="110" height="36" fill="#1b1b1d"/>
<rect x="36" y="206" width="22" height="22" fill="#e8c040"/><rect x="82" y="211" width="14" height="21" fill="#e0b22c"/><rect x="109" y="219" width="24" height="21" fill="#e6c23a"/>
<ellipse cx="34" cy="227" rx="12" ry="12" fill="#d8d4c8"/><ellipse cx="107" cy="234" rx="12" ry="8" fill="#d6d2c6"/>
<rect x="67" y="207" width="10" height="7" fill="#4a7ad0"/>
<path d="M74 214 Q64 226 80 232 Q96 232 98 218" stroke="#c05a30" stroke-width="1.300" fill="none"/>
<ellipse cx="205.500" cy="212" rx="26" ry="31" fill="#111113"/>
<ellipse cx="214.900" cy="214.600" rx="14.500" ry="22.500" fill="url(#khub)"/><ellipse cx="215.500" cy="215" rx="3" ry="4" fill="#c48a08"/>
<ellipse cx="160.500" cy="226" rx="29" ry="31" fill="#0f0f11"/>
<ellipse cx="174.500" cy="225.500" rx="14" ry="19.500" fill="url(#khub)"/><ellipse cx="175" cy="226" rx="3" ry="4" fill="#c48a08"/>
<rect x="194" y="234" width="24" height="6" fill="#5a6e96"/>
<rect x="19" y="146.500" width="4.300" height="93.500" fill="#b8963a"/>
<rect x="124.500" y="153" width="5" height="87" fill="#c8a040"/>
<rect x="218" y="134" width="2.600" height="44" fill="#b88a30"/><rect x="217" y="136" width="1.500" height="20" fill="#d02020"/>
</g></svg></div>
<div class="card" style="left:546px;top:729px;width:240px;height:240px;"></div>
<svg class="i" style="left:618.0px;top:801.0px" width="96.0" height="96.0" viewBox="0 0 512 512"><path fill="#121212" d="M184 48H328c4.4 0 8 3.6 8 8V96H176V56c0-4.400 3.600-8 8-8zm-56 8V96H64C28.700 96 0 124.700 0 160v96H192 320 512V160c0-35.300-28.700-64-64-64H384V56c0-30.900-25.100-56-56-56H184c-30.900 0-56 25.100-56 56zM512 288H320v32c0 17.700-14.300 32-32 32H224c-17.700 0-32-14.300-32-32V288H0V416c0 35.300 28.700 64 64 64H448c35.300 0 64-28.700 64-64V288z"/></svg>
<span class="t" style="left:29.7px;top:993px;font-size:22px;font-weight:700;color:#fff;transform:scaleX(0.8993);">BMW Group Physical</span>
<span class="t" style="left:29.8px;top:1023px;font-size:22px;font-weight:700;color:#fff;transform:scaleX(0.8739);">Asset Tracking System</span>
<span class="t" style="left:287.7px;top:993px;font-size:22px;font-weight:700;color:#fff;transform:scaleX(0.8895);">BookBot</span>
<span class="t" style="left:546.4px;top:993px;font-size:22px;font-weight:700;color:#fff;transform:scaleX(0.9144);">Spotify Themed</span>
<span class="t" style="left:545.7px;top:1023px;font-size:22px;font-weight:700;color:#fff;transform:scaleX(0.9213);">Portfolio</span>
<span class="t" style="left:28.8px;top:1103px;font-size:37px;font-weight:700;color:#fff;transform:scaleX(1.0007);">About</span>
<div class="a" style="left:1317px;top:0px;width:23px;height:1169px;background:#fcfcfc"></div>
<div class="a" style="left:1322px;top:306px;width:13px;height:459px;background:#8b8b8b;border-radius:6.500px"></div>
<svg class="i" style="left:1321px;top:5.400000000000006px" width="15" height="12" viewBox="0 0 15 12"><path d="M7.500 1.200 Q8.300 1.200 8.800 2 L14.200 9.400 Q15 10.800 13.400 10.800 H1.600 Q0 10.800 .8 9.400 L6.200 2 Q6.700 1.200 7.500 1.200Z" fill="#8b8b8b"/></svg>
<svg class="i" style="left:1321px;top:1152.4px" width="15" height="12" viewBox="0 0 15 12"><path d="M7.500 10.800 Q8.300 10.800 8.800 10 L14.200 2.600 Q15 1.200 13.400 1.200 H1.600 Q0 1.200 .8 2.600 L6.200 10 Q6.700 10.800 7.500 10.800Z" fill="#8b8b8b"/></svg>
</div>
<div class="sq" style="left:24px;top:1289px;width:84px;height:84px;"></div>
<svg class="i" style="left:50.0px;top:1312.2px" width="31.9" height="36.5" viewBox="0 0 448 512"><path fill="#1a1a1a" d="M224 256A128 128 0 1 0 224 0a128 128 0 1 0 0 256zm-45.700 48C79.800 304 0 383.800 0 482.300C0 498.700 13.300 512 29.700 512H418.300c16.400 0 29.700-13.300 29.700-29.700C448 383.800 368.200 304 269.700 304H178.300z"/></svg>
<span class="t" style="left:131.4px;top:1311px;font-size:21.5px;font-weight:400;color:#fff;transform:scaleX(1.0156);">Highlights</span>
<span class="t" style="left:132.2px;top:1337px;font-size:19px;font-weight:400;color:#b3b3b3;transform:scaleX(0.9863);">About</span>
<svg class="i" style="left:606.0px;top:1294.0px" width="36.0" height="36.0" viewBox="0 0 512 512"><path fill="#1db954" d="M403.800 34.400c12-5 25.700-2.200 34.900 6.900l64 64c6 6 9.400 14.100 9.400 22.600s-3.400 16.600-9.400 22.600l-64 64c-9.200 9.200-22.900 11.900-34.900 6.900s-19.800-16.600-19.800-29.600V160H352c-10.100 0-19.600 4.700-25.600 12.800L284 229.300 244 176l31.200-41.600C293.300 110.200 321.800 96 352 96h32V64c0-12.900 7.800-24.600 19.800-29.600zM164 282.700L204 336l-31.200 41.600C154.700 401.800 126.200 416 96 416H32c-17.700 0-32-14.300-32-32s14.300-32 32-32H96c10.100 0 19.600-4.700 25.600-12.800L164 282.700zm274.600 188c-9.200 9.200-22.900 11.900-34.900 6.900s-19.800-16.600-19.800-29.600V416H352c-30.200 0-58.700-14.200-76.800-38.400L121.600 172.800c-6-8.100-15.500-12.800-25.600-12.800H32c-17.700 0-32-14.300-32-32s14.300-32 32-32H96c30.200 0 58.700 14.200 76.800 38.400L326.400 339.200c6 8.100 15.500 12.800 25.600 12.800h32V320c0-12.900 7.800-24.600 19.800-29.600s25.700-2.200 34.900 6.900l64 64c6 6 9.400 14.100 9.400 22.600s-3.400 16.600-9.400 22.600l-64 64z"/></svg>
<svg class="i" style="left:677.4px;top:1294.3px" width="23.1" height="37.0" viewBox="0 0 320 512"><path fill="#b3b3b3" d="M267.500 440.600c9.500 7.900 22.800 9.700 34.100 4.400s18.400-16.600 18.400-29V96c0-12.400-7.200-23.700-18.400-29s-24.500-3.600-34.100 4.400l-192 160L64 241V96c0-17.700-14.300-32-32-32S0 78.300 0 96V416c0 17.700 14.300 32 32 32s32-14.300 32-32V271l11.500 9.600 192 160z"/></svg>
<div class="a" style="left:736.3px;top:1288.8px;width:48.4px;height:48.4px;border-radius:50%;background:#fff"></div>
<svg class="i" style="left:753.0px;top:1300.8px" width="18.0" height="24.0" viewBox="0 0 384 512"><path fill="#000" d="M73 39c-14.800-9.100-33.400-9.400-48.500-.9S0 62.600 0 80V432c0 17.400 9.400 33.400 24.500 41.900s33.700 8.100 48.500-.9L361 297c14.300-8.700 23-24.200 23-41s-8.700-32.200-23-41L73 39z"/></svg>
<svg class="i" style="left:820.0px;top:1294.3px" width="23.1" height="37.0" viewBox="0 0 320 512"><path fill="#b3b3b3" d="M52.500 440.600c-9.500 7.900-22.800 9.700-34.100 4.400S0 428.400 0 416V96C0 83.600 7.200 72.300 18.400 67s24.500-3.600 34.100 4.400l192 160L256 241V96c0-17.700 14.300-32 32-32s32 14.300 32 32V416c0 17.700-14.300 32-32 32s-32-14.300-32-32V271l-11.500 9.600-192 160z"/></svg>
<svg class="i" style="left:879.0px;top:1294.5px" width="36.0" height="36.0" viewBox="0 0 512 512"><path fill="#1db954" d="M0 224c0 17.700 14.300 32 32 32s32-14.300 32-32c0-53 43-96 96-96H320v32c0 12.900 7.800 24.600 19.800 29.600s25.700 2.200 34.900-6.900l64-64c12.500-12.500 12.500-32.800 0-45.300l-64-64c-9.200-9.200-22.900-11.900-34.900-6.900S320 19.100 320 32V64H160C71.600 64 0 135.600 0 224zm512 64c0-17.700-14.300-32-32-32s-32 14.300-32 32c0 53-43 96-96 96H192V352c0-12.900-7.800-24.600-19.800-29.600s-25.700-2.200-34.900 6.900l-64 64c-12.500 12.500-12.500 32.800 0 45.300l64 64c9.200 9.200 22.900 11.900 34.900 6.900s19.800-16.600 19.800-29.600V448H352c88.400 0 160-71.600 160-160z"/></svg>
<span class="t" style="left:533.7px;top:1353px;font-size:18.5px;font-weight:400;color:#b3b3b3;transform:scaleX(0.9284);">0:20</span>
<div class="a" style="left:579px;top:1358px;width:362px;height:6px;background:#4b5563;border-radius:3px"></div>
<div class="a" style="left:579px;top:1358px;width:242px;height:6px;background:#fff;border-radius:3px"></div>
<span class="t" style="left:953.7px;top:1353px;font-size:18.5px;font-weight:400;color:#b3b3b3;transform:scaleX(0.9284);">0:30</span>
<div class="a" style="left:0px;top:1364px;width:347px;height:32px;background:rgba(44,26,19,.93);border-radius:0 7px 0 0"></div>
<span class="t" style="left:7.6px;top:1371px;font-size:18px;font-weight:400;color:#ddb198;transform:scaleX(0.9921);">127.0.0.1:5500/src/education-3-cisco.html</span>
</div>
</div></div>
</body></html>
